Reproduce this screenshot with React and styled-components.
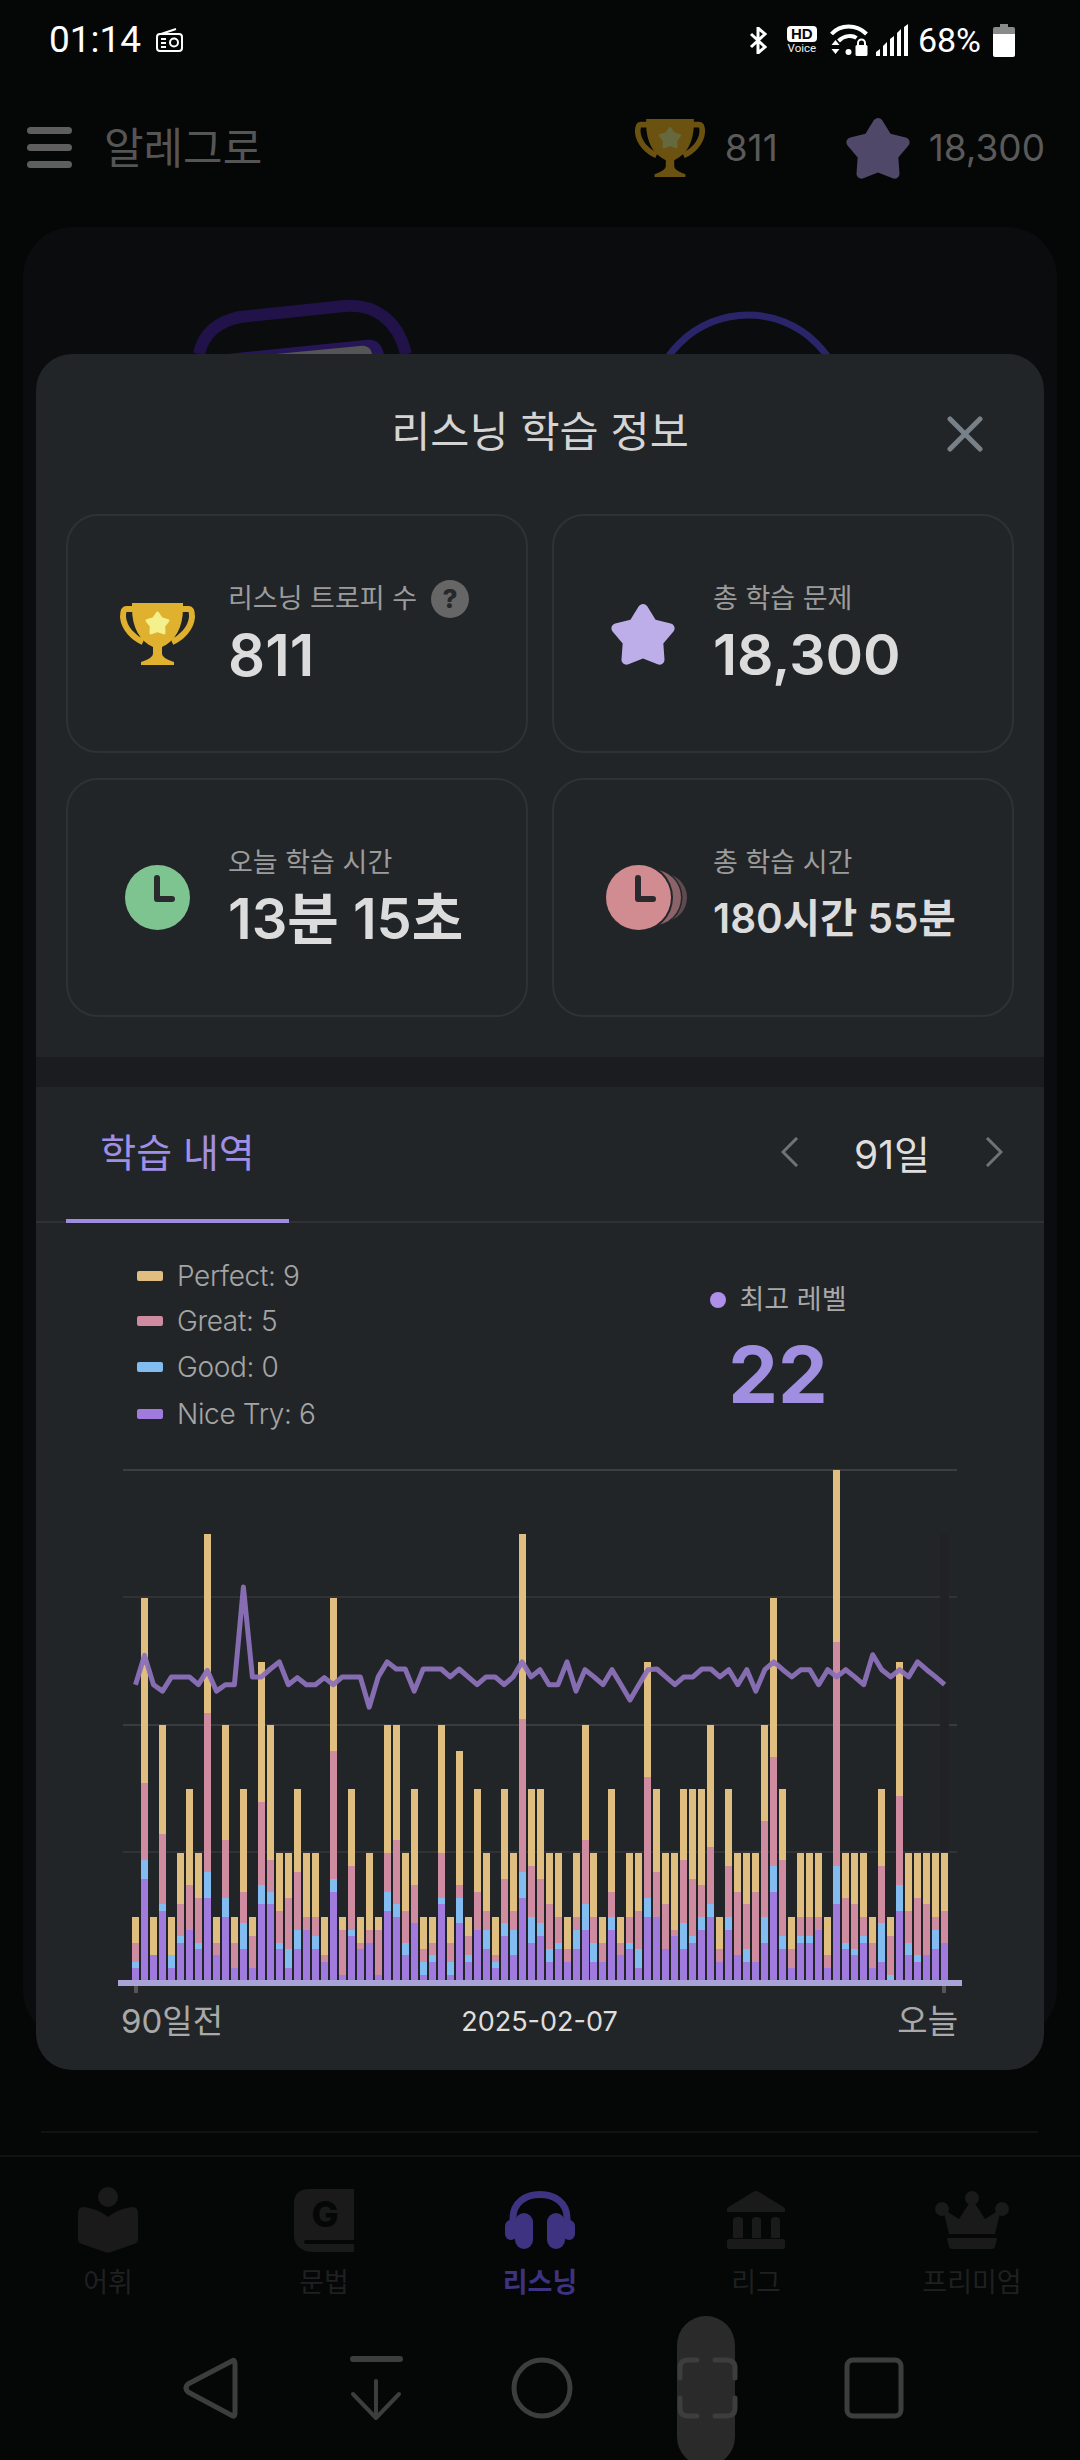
import React from "react";
import styled, { createGlobalStyle } from "styled-components";

const FONT = `Inter, "Noto Sans CJK KR", sans-serif`;

const Global = createGlobalStyle`
  html, body { margin: 0; padding: 0; background: #050606; }
  * { box-sizing: border-box; }
  body { font-family: ${FONT}; }
`;

/* ---------- page shell ---------- */
const Page = styled.div`
  position: relative;
  width: 1080px;
  height: 2460px;
  background: #050606;
  overflow: hidden;
  display: flex;
  flex-direction: column;
`;

const StatusBar = styled.div`
  height: 80px;
  padding: 0 65px 0 49px;
  display: flex;
  align-items: center;
  justify-content: space-between;
  color: #fff;
`;
const StatusLeft = styled.div`
  display: flex;
  align-items: center;
  gap: 15px;
`;
const StatusTime = styled.span`
  font-family: Roboto, sans-serif;
  font-size: 37px;
  line-height: 40px;
`;
const StatusRight = styled.div`
  display: flex;
  align-items: center;
`;
const StatusPct = styled.span`
  font-family: Roboto, sans-serif;
  font-size: 34px;
  margin: 0 12px 0 10px;
  line-height: 40px;
`;
const HdBadge = styled.div`
  width: 32px;
  margin: 0 11px 0 19px;
  display: flex;
  flex-direction: column;
  align-items: center;
`;
const HdMark = styled.span`
  width: 30px;
  height: 16px;
  border-radius: 4px;
  background: #fff;
  color: #050606;
  font: 900 15px/16px "Liberation Sans", sans-serif;
  text-align: center;
`;
const HdVoice = styled.span`
  font: 400 11.5px/13px Roboto, sans-serif;
  color: #eee;
`;

const AppHeader = styled.div`
  height: 147px;
  padding: 0 35px 12px 27px;
  display: flex;
  align-items: center;
`;
const Burger = styled.div`
  width: 45px;
  display: flex;
  flex-direction: column;
  gap: 10px;
  margin-right: 32px;
  & > i {
    display: block;
    height: 7px;
    border-radius: 4px;
    background: #5e5e5e;
  }
`;
const AppTitle = styled.div`
  flex: 1;
  font-size: 43px;
  color: #555;
  line-height: 50px;
`;
const HeaderStat = styled.div`
  display: flex;
  align-items: center;
  gap: 19px;
  margin-left: ${(p) => p.$ml}px;
`;
const HeaderNum = styled.span`
  font-size: 37px;
  color: #5a5a5a;
  line-height: 44px;
`;

const BgCard = styled.div`
  position: relative;
  margin: 0 23px;
  height: 1813px;
  border-radius: 50px;
  background: #0b0c0d;
  flex: none;
`;
const BgArt = styled.svg`
  display: block;
  width: 1034px;
  height: 127px;
`;
const BgDivider = styled.div`
  flex: none;
  height: 2px;
  margin: 91px 42px 0 41px;
  background: #0f1312;
`;

const BottomNav = styled.div`
  margin-top: 22px;
  border-top: 2px solid #0e1211;
  display: grid;
  grid-template-columns: repeat(5, 216px);
  padding-top: 28px;
  height: 158px;
`;
const NavItem = styled.div`
  display: flex;
  flex-direction: column;
  align-items: center;
  color: ${(p) => (p.$active ? "#3d3380" : "#1a1a1a")};
`;
const NavIconBox = styled.div`
  height: 70px;
  display: flex;
  align-items: center;
  justify-content: center;
`;
const NavLabel = styled.span`
  font-size: 27px;
  line-height: 36px;
  margin-top: 10px;
  font-weight: ${(p) => (p.$active ? 700 : 400)};
  color: ${(p) => (p.$active ? "#3d3380" : "#1f2021")};
`;

const SysNav = styled.div`
  flex: 1;
  position: relative;
  display: block;
`;
const SysSvg = styled.svg`
  position: absolute;
  left: 0;
  bottom: 0;
  width: 1080px;
  height: 150px;
`;

/* ---------- modal ---------- */
const Modal = styled.div`
  position: absolute;
  left: 36px;
  top: 354px;
  width: 1008px;
  height: 1716px;
  border-radius: 36px;
  background: #222528;
  display: flex;
  flex-direction: column;
`;
const ModalHead = styled.div`
  position: relative;
  height: 160px;
  padding-bottom: 4px;
  display: flex;
  align-items: center;
  justify-content: center;
`;
const ModalTitle = styled.h2`
  margin: 0;
  font-size: 42.5px;
  font-weight: 400;
  color: #d4d4d4;
  line-height: 50px;
`;
const CloseBtn = styled.svg`
  position: absolute;
  left: 911px;
  top: 62px;
  width: 36px;
  height: 36px;
`;
const CardGrid = styled.div`
  padding: 0 30px 40px;
  display: grid;
  grid-template-columns: 462px 462px;
  grid-auto-rows: 239px;
  column-gap: 24px;
  row-gap: 25px;
`;
const Card = styled.div`
  border: 2px solid #2f3235;
  border-radius: 32px;
  padding-left: 46px;
  display: flex;
  align-items: center;
`;
const IconSlot = styled.div`
  position: relative;
  width: 86px;
  display: flex;
  justify-content: center;
  margin-right: ${(p) => p.$mr || 28}px;
  flex: none;
`;
const CardText = styled.div`
  display: flex;
  flex-direction: column;
`;
const CardLabelRow = styled.div`
  display: flex;
  align-items: center;
  gap: 14px;
  height: 40px;
`;
const CardLabel = styled.span`
  font-size: 27px;
  color: #9c9c9c;
  line-height: 40px;
`;
const Help = styled.span`
  width: 38px;
  height: 38px;
  border-radius: 50%;
  background: #666;
  color: #26282b;
  font-size: 26px;
  font-weight: 800;
  line-height: 38px;
  text-align: center;
`;
const CardValue = styled.div`
  font-size: ${(p) => p.$size || 58}px;
  font-weight: 600;
  color: #dcdcdc;
  line-height: 66px;
  margin-top: 3px;
  white-space: nowrap;
`;
const Band = styled.div`
  height: 30px;
  background: #1a1c1f;
`;
const TabBar = styled.div`
  height: 136px;
  padding-left: 30px;
  border-bottom: 2px solid #2f3134;
  display: flex;
  align-items: stretch;
  justify-content: space-between;
`;
const ActiveTab = styled.div`
  width: 223px;
  height: 136px;
  border-bottom: 4px solid #9d8ce0;
  padding-bottom: 6px;
  color: #a08fe6;
  font-size: 39px;
  display: flex;
  align-items: center;
  justify-content: center;
`;
const Stepper = styled.div`
  width: 222px;
  margin-right: 41px;
  padding-bottom: 4px;
  display: flex;
  align-items: center;
  justify-content: space-between;
`;
const StepValue = styled.span`
  font-size: 39px;
  color: #dedede;
`;
const SummaryRow = styled.div`
  height: 236px;
  display: flex;
  padding: 31px 0 0 101px;
`;
const Legend = styled.div`
  width: 566px;
  display: flex;
  flex-direction: column;
`;
const LegendRow = styled.div`
  height: ${(p) => p.$h}px;
  display: flex;
  align-items: center;
  gap: 14px;
`;
const Swatch = styled.i`
  width: 26px;
  height: 10px;
  border-radius: 2px;
  background: ${(p) => p.$color};
`;
const LegendText = styled.span`
  font-size: 28px;
  font-weight: 300;
  letter-spacing: -0.35px;
  color: #a5a5a5;
`;
const LevelBox = styled.div`
  width: 150px;
  display: flex;
  flex-direction: column;
  align-items: center;
  padding-top: 25px;
`;
const LevelTitle = styled.div`
  display: flex;
  align-items: center;
  gap: 14px;
  font-size: 27px;
  color: #a8a8a8;
  line-height: 42px;
  white-space: nowrap;
`;
const LevelDot = styled.i`
  width: 16px;
  height: 16px;
  border-radius: 50%;
  background: #ae90ea;
`;
const LevelValue = styled.div`
  font-size: 79px;
  font-weight: 700;
  line-height: 96px;
  margin-top: 5px;
  color: #a08fe0;
`;
const ChartSvg = styled.svg`
  display: block;
  width: 1008px;
  height: 540px;
`;
const AxisRow = styled.div`
  display: grid;
  grid-template-columns: 1fr auto 1fr;
  align-items: center;
  padding: 0 86px 0 85px;
`;
const AxisSide = styled.span`
  font-size: 33px;
  line-height: 40px;
  color: #a9a9a9;
  text-align: ${(p) => p.$align};
`;
const AxisDate = styled.span`
  font-size: 27px;
  line-height: 40px;
  color: #dedede;
  padding-top: 3px;
`;

/* ---------- icons ---------- */
const starPoints = (cx, cy, R, r) =>
  Array.from({ length: 10 }, (_, i) => {
    const a = -Math.PI / 2 + (i * Math.PI) / 5;
    const rad = i % 2 ? r : R;
    return `${(cx + rad * Math.cos(a)).toFixed(1)},${(cy + rad * Math.sin(a)).toFixed(1)}`;
  }).join(" ");

const Star = ({ size, color }) => (
  <svg width={size} height={size} viewBox="0 0 64 64">
    <polygon
      points={starPoints(32, 35, 28, 16)}
      fill={color}
      stroke={color}
      strokeWidth="10"
      strokeLinejoin="round"
    />
  </svg>
);

const Trophy = ({ w, h, cup, star }) => (
  <svg width={w} height={h} viewBox="0 0 75 62">
    <path
      d="M12 0H63V5C63 25 55 38 42 44V50C42 54 46 56 54 59V62H21V59C29 56 33 54 33 50V44C20 38 12 25 12 5Z"
      fill={cup}
    />
    <path
      d="M14 6H6C3 6 3 11 3 14C4 26 14 35 23 39M61 6H69C72 6 72 11 72 14C71 26 61 35 52 39"
      fill="none"
      stroke={cup}
      strokeWidth="6"
    />
    <polygon
      points={starPoints(37.5, 21, 11, 6.5)}
      fill={star}
      stroke={star}
      strokeWidth="3"
      strokeLinejoin="round"
    />
  </svg>
);

const ClockHand = () => (
  <path
    d="M32 13V34H47"
    fill="none"
    stroke="#2a2a2e"
    strokeWidth="6"
    strokeLinecap="round"
    strokeLinejoin="round"
  />
);

const Clock = ({ color, d = 65 }) => (
  <svg width={d} height={d} viewBox="0 0 65 65">
    <circle cx="32.5" cy="32.5" r="32.5" fill={color} />
    <ClockHand />
  </svg>
);

const StackedClockSvg = styled.svg`
  margin-left: 8px;
  flex: none;
`;
const StackedClock = () => (
  <StackedClockSvg width="82" height="65" viewBox="0 0 82 65">
    <circle cx="57" cy="32.5" r="24" fill="#5d4b4f" />
    <circle cx="47" cy="32.5" r="29.5" fill="#23262a" />
    <circle cx="47" cy="32.5" r="28" fill="#8a6468" />
    <circle cx="32.5" cy="32.5" r="34.5" fill="#23262a" />
    <circle cx="32.5" cy="32.5" r="32.5" fill="#d08c90" />
    <ClockHand />
  </StackedClockSvg>
);

const Chevron = ({ dir }) => (
  <svg width="18" height="30" viewBox="0 0 18 30">
    <path
      d={dir === "l" ? "M16 1L2 15L16 29" : "M2 1L16 15L2 29"}
      fill="none"
      stroke="#6c747a"
      strokeWidth="3"
    />
  </svg>
);

const IconRadio = () => (
  <svg width="27" height="24" viewBox="0 0 27 24" fill="none" stroke="#fff" strokeWidth="2">
    <rect x="1" y="6" width="25" height="17" rx="3" />
    <path d="M5 6L20 1" />
    <circle cx="18" cy="14.500" r="4" />
    <path d="M5 11H10M5 15H10M5 19H10" />
  </svg>
);

const IconBluetooth = () => (
  <svg width="18" height="27" viewBox="0 0 18 27" fill="none" stroke="#fff" strokeWidth="3">
    <path d="M2 7L16 20L9 26V1L16 7L2 20" />
  </svg>
);

const WifiSvg = styled.svg`
  margin-right: 8px;
`;
const IconWifi = () => (
  <WifiSvg width="39" height="34" viewBox="0 0 38 34">
    <g fill="none" stroke="#fff" strokeWidth="4">
      <path d="M2 11C11 1 27 1 37 11" />
      <path d="M9 18C15 12 23 12 27 15" />
    </g>
    <circle cx="19" cy="29" r="3" fill="#fff" />
    <path d="M2 22L6 17L10 22ZM2 26L6 31L10 26Z" fill="#fff" />
    <rect x="26" y="22" width="12" height="11" rx="1.500" fill="#fff" />
    <path d="M28.500 22V20A3.500 3.500 0 0 1 35.500 20V22" fill="none" stroke="#fff" strokeWidth="2" />
  </WifiSvg>
);

const IconSignal = () => (
  <svg width="32" height="32" viewBox="0 0 32 32" fill="#fff">
    <path d="M0 32V28L4 25V32ZM7 32V22L11 18V32ZM14 32V15L18 12V32ZM21 32V9L25 5V32ZM28 32V3L32 0V32Z" />
  </svg>
);

const IconBattery = () => (
  <svg width="22" height="33" viewBox="0 0 22 33">
    <path d="M7 0H15V3H20Q22 3 22 5V10H0V5Q0 3 2 3H7Z" fill="#8a8a8a" />
    <path d="M0 10H22V31Q22 33 20 33H2Q0 33 0 31Z" fill="#fff" />
  </svg>
);

const NavReader = () => (
  <svg width="60" height="66" viewBox="0 0 60 66" fill="currentColor">
    <circle cx="30" cy="10" r="10" />
    <path d="M6 20C14 21 23 24 30 30C37 24 46 21 54 20Q60 20 60 26V52Q60 56 56 57L33 65Q30 66 27 65L4 57Q0 56 0 52V26Q0 20 6 20Z" />
  </svg>
);

const NavGrammar = () => (
  <svg width="60" height="64" viewBox="0 0 60 64">
    <path d="M14 1H60V58V64H20C8 64 0 58 0 48V15C0 6 6 1 14 1Z" fill="currentColor" />
    <path d="M12 54H60" stroke="#050606" strokeWidth="4" strokeLinecap="round" />
    <text x="31" y="39" textAnchor="middle" fontFamily="Inter, sans-serif" fontSize="36" fontWeight="800" fill="#050606">
      G
    </text>
  </svg>
);

const NavHeadphones = () => (
  <svg width="70" height="58" viewBox="0 0 70 58" fill="currentColor">
    <path d="M8 32V27C8 12 20 3.500 35 3.500C50 3.500 62 12 62 27V32" fill="none" stroke="currentColor" strokeWidth="7" />
    <rect x="10" y="22" width="18" height="36" rx="9" />
    <rect x="42" y="22" width="18" height="36" rx="9" />
    <rect x="0" y="29" width="12" height="20" rx="6" />
    <rect x="58" y="29" width="12" height="20" rx="6" />
  </svg>
);

const NavBank = () => (
  <svg width="58" height="58" viewBox="0 0 58 58" fill="currentColor">
    <path d="M26 1Q29 -1 32 1L58 17V21H0V17Z" />
    <path d="M6 29Q6 26 11 26Q16 26 16 29V47H6ZM25 29Q25 26 29.500 26Q34 26 34 29V47H25ZM44 29Q44 26 48.500 26Q53 26 53 29V47H44Z" />
    <rect x="0" y="48" width="58" height="10" rx="2" />
  </svg>
);

const NavCrown = () => (
  <svg width="74" height="58" viewBox="0 0 74 58" fill="currentColor">
    <circle cx="37" cy="7" r="7" />
    <circle cx="7" cy="18" r="7" />
    <circle cx="67" cy="18" r="7" />
    <path d="M37 8L50 28L66 18L60 43H14L8 18L24 28Z" />
    <path d="M12 47H62L60 56Q59 58 57 58H17Q15 58 14 56Z" />
  </svg>
);

/* ---------- chart data ---------- */
const BARS = [
  [2,1,3,4],[16,3,12,29],[4,0,0,6],[11,1,11,17],[2,2,0,6],[6,1,5,8],[8,0,7,15],[5,1,7,7],
  [13,4,25,28],[4,0,2,4],[10,3,9,18],[2,0,4,4],[5,4,5,16],[2,0,5,3],[12,3,13,22],[12,2,5,21],
  [5,1,5,9],[2,3,8,7],[5,3,9,13],[8,0,2,10],[5,2,3,10],[3,0,1,6],[14,2,20,24],[1,0,7,2],
  [7,1,10,12],[5,0,1,4],[6,0,2,12],[1,0,7,2],[11,3,6,20],[10,2,10,18],[4,2,5,9],[9,0,6,15],
  [1,2,2,5],[3,1,2,4],[12,1,7,20],[1,2,3,4],[9,4,2,21],[3,1,3,3],[8,0,6,16],[5,3,3,9],
  [2,1,1,6],[7,2,7,14],[4,4,3,9],[13,4,24,29],[6,4,8,12],[7,2,7,14],[3,2,7,8],[5,1,4,10],
  [3,0,2,5],[5,3,2,10],[8,4,10,18],[3,3,4,10],[3,0,3,4],[8,2,4,16],[4,0,2,4],[5,1,4,10],
  [2,3,6,9],[10,3,19,18],[10,0,7,13],[5,0,7,8],[7,0,1,12],[5,4,10,11],[6,1,9,14],[8,2,5,15],
  [10,2,9,19],[3,0,2,5],[8,2,8,12],[4,0,10,6],[3,2,7,8],[3,0,11,6],[6,4,15,15],[14,4,17,25],
  [5,2,12,11],[2,0,3,5],[6,1,3,10],[6,1,3,10],[8,0,2,10],[2,0,2,6],[12,6,35,27],[5,1,7,7],
  [4,1,7,8],[6,1,3,10],[2,0,4,4],[3,6,9,12],[0,1,6,3],[11,4,14,21],[4,2,5,9],[3,1,9,7],
  [4,0,8,8],[5,3,2,10],[6,0,5,9],
];
const LINE = [
  632,550,632,650,610,610,610,632,592,650,632,632,358,610,610,588,568,632,612,632,632,612,632,
  610,610,610,695,610,568,588,588,650,588,588,588,610,588,610,632,610,610,632,610,568,610,590,
  632,632,568,650,590,610,632,590,632,675,632,590,588,610,632,610,610,588,588,610,590,632,590,
  650,590,568,590,610,590,590,632,590,610,590,610,632,548,590,610,590,610,568,590,610,632,
];
const COLORS = ["#a07bdd", "#83bcf0", "#cf8b9f", "#dfbe80"];
const UNIT = 6.39;
const BASE = 1982;
const barX = (i) => 132 + i * 8.99;

const Chart = () => {
  const linePts = LINE.map((z, i) => `${(barX(i) + 3.5).toFixed(1)},${(1460 + z / 2.8).toFixed(1)}`).join(" ");
  return (
    <ChartSvg viewBox="36 1460 1008 540">
      {[1471, 1598, 1726, 1853].map((y, i) => (
        <rect key={y} x="123" y={y - 1} width="834" height="2" fill={i === 0 ? "#3c3e41" : i === 2 ? "#393b3e" : "#303235"} />
      ))}
      <rect x="940" y="1535" width="9" height="318" fill="#202225" />
      {BARS.map((vals, i) => {
        let top = BASE;
        return (
          <g key={i} shapeRendering="crispEdges">
            {vals.map((v, k) => {
              if (!v) return null;
              const h = v * UNIT;
              top -= h;
              return <rect key={k} x={barX(i)} y={top} width="7" height={h} fill={COLORS[k]} />;
            })}
          </g>
        );
      })}
      <polyline points={linePts} fill="none" stroke="#8c71b8" strokeOpacity="0.95" strokeWidth="5" strokeLinejoin="round" />
      <rect x="118" y="1981" width="844" height="6" fill="#a9a3d6" />
      <rect x="134" y="1987" width="4" height="7" fill="#55565a" />
      <rect x="942" y="1987" width="4" height="7" fill="#55565a" />
    </ChartSvg>
  );
};

const LEGEND = [
  ["Perfect: 9", "#dfbe80", 44],
  ["Great: 5", "#cf8b9f", 45],
  ["Good: 0", "#83bcf0", 47],
  ["Nice Try: 6", "#a07bdd", 47],
];

export default function App() {
  return (
    <Page>
      <Global />
      <StatusBar>
        <StatusLeft>
          <StatusTime>01:14</StatusTime>
          <IconRadio />
        </StatusLeft>
        <StatusRight>
          <IconBluetooth />
          <HdBadge>
            <HdMark>HD</HdMark>
            <HdVoice>Voice</HdVoice>
          </HdBadge>
          <IconWifi />
          <IconSignal />
          <StatusPct>68%</StatusPct>
          <IconBattery />
        </StatusRight>
      </StatusBar>

      <AppHeader>
        <Burger>
          <i />
          <i />
          <i />
        </Burger>
        <AppTitle>알레그로</AppTitle>
        <HeaderStat $ml={0}>
          <Trophy w={72} h={58} cup="#6b5210" star="#66683e" />
          <HeaderNum>811</HeaderNum>
        </HeaderStat>
        <HeaderStat $ml={68}>
          <Star size={64} color="#4f4868" />
          <HeaderNum>18,300</HeaderNum>
        </HeaderStat>
      </AppHeader>

      <BgCard>
        <BgArt viewBox="23 227 1034 127">
          <path d="M199 354C203 335 215 322 240 317L345 306C375 304 398 320 406 354" fill="none" stroke="#21124a" strokeWidth="12" />
          <path d="M227 354L365 340C378 338 382 346 384 354Z" fill="#261658" />
          <path d="M276 354L360 346C368 345 371 349 372 354Z" fill="#555" />
          <circle cx="748" cy="412" r="97" fill="none" stroke="#2a2468" strokeWidth="7" />
        </BgArt>
      </BgCard>
      <BgDivider />

      <BottomNav>
        <NavItem>
          <NavIconBox><NavReader /></NavIconBox>
          <NavLabel>어휘</NavLabel>
        </NavItem>
        <NavItem>
          <NavIconBox><NavGrammar /></NavIconBox>
          <NavLabel>문법</NavLabel>
        </NavItem>
        <NavItem $active>
          <NavIconBox><NavHeadphones /></NavIconBox>
          <NavLabel $active>리스닝</NavLabel>
        </NavItem>
        <NavItem>
          <NavIconBox><NavBank /></NavIconBox>
          <NavLabel>리그</NavLabel>
        </NavItem>
        <NavItem>
          <NavIconBox><NavCrown /></NavIconBox>
          <NavLabel>프리미엄</NavLabel>
        </NavItem>
      </BottomNav>

      <SysNav>
        <SysSvg viewBox="0 2310 1080 150">
          <rect x="677" y="2316" width="58" height="150" rx="29" fill="#2a2a2a" />
          <g fill="none" stroke="#3d3d3d" strokeWidth="5" strokeLinejoin="round" strokeLinecap="round">
            <path d="M232 2361Q235 2359 235 2364V2413Q235 2418 231 2415L188 2392Q184 2388 188 2384Z" />
            <path d="M376 2381V2418M353 2394L376 2418L399 2394" strokeWidth="4" />
            <circle cx="542" cy="2388" r="28" />
            <rect x="847" y="2360" width="54" height="56" rx="6" />
            <path d="M680 2378V2368Q680 2360 688 2360H697M715 2360H726Q735 2360 735 2368V2378M680 2398V2408Q680 2416 688 2416H697M715 2416H726Q735 2416 735 2408V2398" />
          </g>
          <rect x="350" y="2356" width="53" height="6" rx="3" fill="#3d3d3d" />
        </SysSvg>
      </SysNav>

      <Modal>
        <ModalHead>
          <ModalTitle>리스닝 학습 정보</ModalTitle>
          <CloseBtn viewBox="0 0 36 36">
            <path d="M3 3L33 33M33 3L3 33" stroke="#788088" strokeWidth="5" strokeLinecap="round" />
          </CloseBtn>
        </ModalHead>

        <CardGrid>
          <Card>
            <IconSlot><Trophy w={75} h={62} cup="#e0b12f" star="#f4f08c" /></IconSlot>
            <CardText>
              <CardLabelRow>
                <CardLabel>리스닝 트로피 수</CardLabel>
                <Help>?</Help>
              </CardLabelRow>
              <CardValue>811</CardValue>
            </CardText>
          </Card>
          <Card>
            <IconSlot $mr={27}><Star size={64} color="#bdaeea" /></IconSlot>
            <CardText>
              <CardLabelRow><CardLabel>총 학습 문제</CardLabel></CardLabelRow>
              <CardValue $size={57}>18,300</CardValue>
            </CardText>
          </Card>
          <Card>
            <IconSlot><Clock color="#7ec491" /></IconSlot>
            <CardText>
              <CardLabelRow><CardLabel>오늘 학습 시간</CardLabel></CardLabelRow>
              <CardValue $size={56}>13분 15초</CardValue>
            </CardText>
          </Card>
          <Card>
            <IconSlot $mr={27}><StackedClock /></IconSlot>
            <CardText>
              <CardLabelRow><CardLabel>총 학습 시간</CardLabel></CardLabelRow>
              <CardValue $size={40.5}>180시간 55분</CardValue>
            </CardText>
          </Card>
        </CardGrid>

        <Band />

        <TabBar>
          <ActiveTab>학습 내역</ActiveTab>
          <Stepper>
            <Chevron dir="l" />
            <StepValue>91일</StepValue>
            <Chevron dir="r" />
          </Stepper>
        </TabBar>

        <SummaryRow>
          <Legend>
            {LEGEND.map(([t, c, h]) => (
              <LegendRow key={t} $h={h}>
                <Swatch $color={c} />
                <LegendText>{t}</LegendText>
              </LegendRow>
            ))}
          </Legend>
          <LevelBox>
            <LevelTitle>
              <LevelDot />
              최고 레벨
            </LevelTitle>
            <LevelValue>22</LevelValue>
          </LevelBox>
        </SummaryRow>

        <Chart />

        <AxisRow>
          <AxisSide $align="left">90일전</AxisSide>
          <AxisDate>2025-02-07</AxisDate>
          <AxisSide $align="right">오늘</AxisSide>
        </AxisRow>
      </Modal>
    </Page>
  );
}
